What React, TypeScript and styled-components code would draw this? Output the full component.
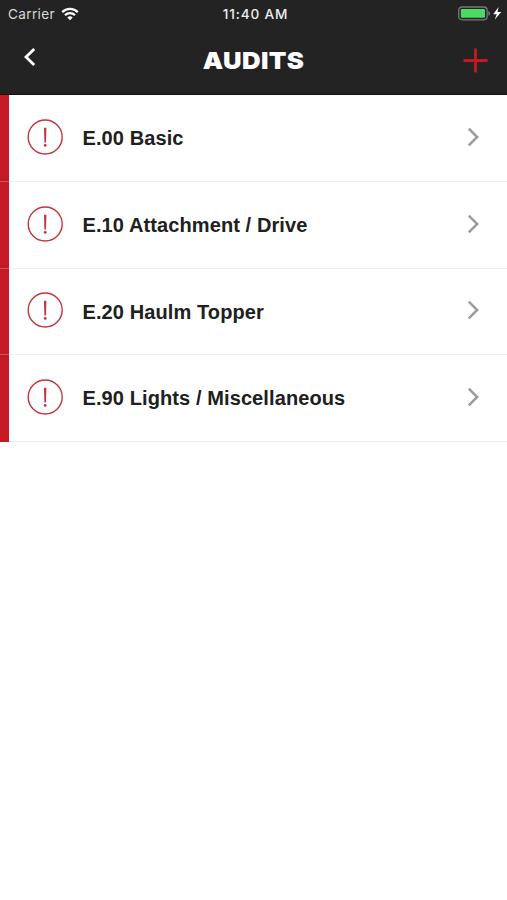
import React from "react";
import styled, { createGlobalStyle } from "styled-components";

const GlobalStyle = createGlobalStyle`
  *, *::before, *::after { box-sizing: border-box; }
  body { margin: 0; background: #fff; }
`;

const Screen = styled.div`
  width: 100%;
  min-height: 900px;
  display: flex;
  flex-direction: column;
  background: #fff;
  color: #202020;
  font-family: "Liberation Sans", Arial, sans-serif;
`;

const Header = styled.header`
  height: 95px;
  background: #232323;
  color: #fff;
  border-bottom: 1px solid #111;
`;

const StatusBar = styled.div`
  height: 27px;
  display: grid;
  grid-template-columns: 1fr auto 1fr;
  align-items: center;
  padding: 0 5px 0 8px;
  font: 500 13.3px/27px Inter, sans-serif;
  color: #ededed;
`;

const Carrier = styled.div`
  display: flex;
  align-items: center;
  gap: 6px;
  font-weight: 400;
  font-size: 13.6px;
  line-height: 25px;
  padding-top: 1px;
  letter-spacing: 0.35px;
  color: #d8d8d8;

  svg {
    margin-top: -1px;
  }
`;

const Clock = styled.time`
  letter-spacing: 0.85px;
  font-size: 13.6px;
  line-height: 25px;
  padding: 2px 0 0 1px;
`;

const Power = styled.div`
  display: flex;
  justify-content: flex-end;
  align-items: center;
`;

const NavBar = styled.nav`
  height: 67px;
  display: grid;
  grid-template-columns: 60px 1fr 60px;
  align-items: center;
`;

const NavButton = styled.button<{ $side: "left" | "right" }>`
  height: 67px;
  display: flex;
  align-items: center;
  justify-content: ${(p) => (p.$side === "left" ? "flex-start" : "flex-end")};
  padding: ${(p) => (p.$side === "left" ? "0 0 8px 23px" : "0 19px 1px 0")};
  border: 0;
  background: transparent;
`;

const Title = styled.h1`
  margin: 0;
  text-align: center;
  font: 900 23.4px/65px Inter, sans-serif;
  letter-spacing: 0.3px;
  transform: scaleX(1.1);
`;

const List = styled.ul`
  margin: 0;
  padding: 0.5px 0 0;
  list-style: none;
  background: linear-gradient(#c51a23, #c51a23) left top / 9px 2px no-repeat;
`;

const Row = styled.li`
  height: 86.67px;
  display: flex;
  align-items: center;
  padding: 0 27px 3.8px 18px;
  border-left: 9px solid #c51a23;
  background: linear-gradient(#ededed, #ededed) bottom / 100% 1px no-repeat;

  &:not(:last-child) {
    border-image: linear-gradient(#c51a23 calc(100% - 1px), #d2545b calc(100% - 1px)) 0 0 0 9;
  }
`;

const Label = styled.span`
  flex: 1;
  margin-left: 19.5px;
  padding-top: 3px;
  font-size: 20px;
  line-height: 24px;
  font-weight: 700;
  letter-spacing: 0.1px;
  white-space: nowrap;
`;

const WifiIcon = () => (
  <svg width="18" height="14" viewBox="0 0 18 14" fill="none" stroke="#fff" strokeWidth="2.2">
    <path d="M1.2 5.1C5.5 .8 12.5 .8 16.8 5.1" />
    <path d="M4 8.1C6.8 5.4 11.2 5.4 14 8.1" />
    <path d="M9 13.2L6.3 10.5Q9 8.2 11.7 10.5Z" fill="#fff" stroke="none" />
  </svg>
);

const BatteryIcon = () => (
  <svg width="44" height="16" viewBox="0 0 44 16">
    <rect x=".7" y="1" width="28.4" height="12.8" rx="3.2" fill="none" stroke="#77797b" strokeWidth="1.3" />
    <rect x="2.8" y="3.1" width="24.2" height="8.6" rx="1.2" fill="#4cd964" />
    <path d="M30.4 5q1.8.5 1.8 2.4t-1.8 2.4z" fill="#77797b" />
    <path d="M40.6 1L35.2 8.3h3.5L36.8 13.6l6.4-7.5h-3.7z" fill="#fff" />
  </svg>
);

const BackIcon = () => (
  <svg width="14" height="20" viewBox="0 0 14 20" fill="none" stroke="#fff" strokeWidth="2.8">
    <path d="M11.2 1.9L3 10L11.2 18.1" />
  </svg>
);

const PlusIcon = () => (
  <svg width="25" height="25" viewBox="0 0 25 25" stroke="#c41a25" strokeWidth="2.8">
    <path d="M12.5 .5V24.5M.5 12.5H24.5" />
  </svg>
);

const AlertIcon = () => (
  <svg width="36" height="36" viewBox="0 0 36 36">
    <circle cx="18.2" cy="18" r="17" fill="none" stroke="#c5343d" strokeWidth="1.4" />
    <path d="M17 8.7h2.4l-.4 14.7h-1.6z" fill="#c5343d" />
    <circle cx="18.2" cy="26.4" r="1.4" fill="#c5343d" />
  </svg>
);

const ChevronIcon = () => (
  <svg width="14" height="20" viewBox="0 0 14 20" fill="none" stroke="#9b9b9b" strokeWidth="2.5">
    <path d="M2.8 1.7L11.2 10L2.8 18.3" />
  </svg>
);

const audits = [
  "E.00 Basic",
  "E.10 Attachment / Drive",
  "E.20 Haulm Topper",
  "E.90 Lights / Miscellaneous",
];

export default function App() {
  return (
    <Screen>
      <GlobalStyle />
      <Header>
        <StatusBar>
          <Carrier>Carrier <WifiIcon /></Carrier>
          <Clock>11:40 AM</Clock>
          <Power><BatteryIcon /></Power>
        </StatusBar>
        <NavBar>
          <NavButton $side="left" aria-label="Back"><BackIcon /></NavButton>
          <Title>AUDITS</Title>
          <NavButton $side="right" aria-label="Add audit"><PlusIcon /></NavButton>
        </NavBar>
      </Header>
      <List>
        {audits.map((name) => (
          <Row key={name}>
            <AlertIcon />
            <Label>{name}</Label>
            <ChevronIcon />
          </Row>
        ))}
      </List>
    </Screen>
  );
}
